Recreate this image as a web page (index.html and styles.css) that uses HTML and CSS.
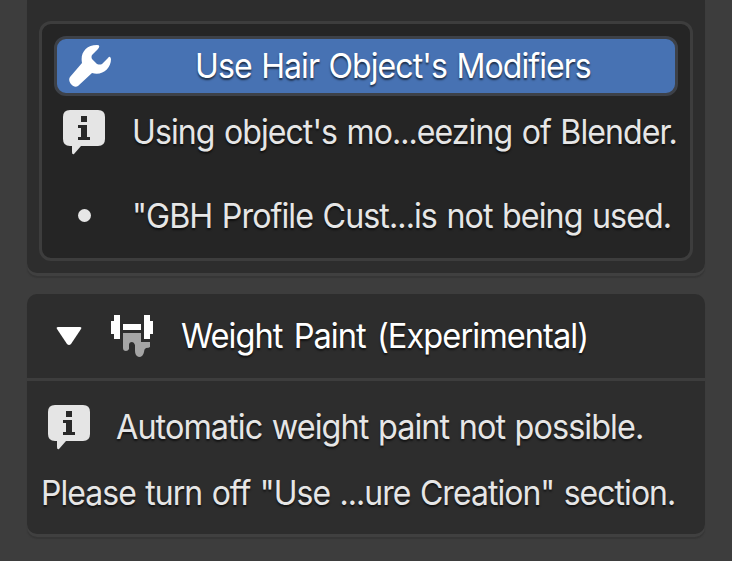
FILE: index.html
```
<!DOCTYPE html>
<html lang="en">
<head>
<meta charset="utf-8">
<title>Hair panel</title>
<link rel="stylesheet" href="styles.css">
</head>
<body>
<svg class="defs" width="0" height="0" aria-hidden="true">
  <symbol id="info" viewBox="0 0 44 46">
    <path fill="#e5e5e5" d="M8 1H36Q43 1 43 8V30Q43 37 36 37H19L12 45Q10 46 10 43V37H8Q1 37 1 30V8Q1 1 8 1Z"/>
    <path fill="#282828" d="M19 7h6v6h-6zM16 16h9v12h3v3H16v-3h3v-9h-3z"/>
  </symbol>
</svg>
<main class="sidebar">
  <section class="panel panel-top">
    <div class="box">
      <button class="button">
        <svg class="wrench" viewBox="0 0 44 44"><path fill="#fff" d="M29 1C18 1 12 9 14 19L2 33C-1 37 5 45 10 42L24 29C34 32 43 25 43 15Q42 11 40 14L34 20Q32 21 29 20L24 15Q23 13 24 11L30 5Q33 1 29 1Z"/></svg>
        <span class="text t1">Use Hair Object's Modifiers</span>
      </button>
      <div class="row info-row"><svg class="info"><use href="#info"/></svg><span class="text t2">Using object's mo...eezing of Blender.</span></div>
      <div class="row dot-row"><span class="dot"></span><span class="text t3">"GBH Profile Cust...is not being used.</span></div>
    </div>
  </section>
  <section class="panel">
    <header class="header">
      <svg class="arrow" viewBox="0 0 26 20"><path fill="#fff" d="M2 1H24Q26 1 25 3L15 18Q13 20 11 18L1 3Q0 1 2 1Z"/></svg>
      <svg class="weight" viewBox="0 0 44 44"><path fill="#fff" d="M4 1h6v24H4v-5H1V7h3zM34 1h6v6h3v13h-3v5h-6zM13 10h18v6H13z"/><path fill="#a5a5a5" d="M13 19H31V28H40V33Q39 34 36 34Q34 35 34 38Q33 43 29 43Q25 42 25 37V31Q24 28 22 28Q19 28 19 31V35Q18 37 16 37Q13 37 13 34Z"/></svg>
      <span class="text t4">Weight Paint (Experimental)</span>
    </header>
    <div class="content">
      <div class="row auto-row"><svg class="info"><use href="#info"/></svg><span class="text t5">Automatic weight paint not possible.</span></div>
      <div class="row last-row"><span class="text t6">Please turn off "Use ...ure Creation" section.</span></div>
    </div>
  </section>
</main>
</body>
</html>
```
FILE: styles.css
```
* { box-sizing: border-box; }
body { margin: 0; background: #3d3d3d; font-family: Inter, sans-serif; }
.defs { display: block; }
svg { flex: none; }
.sidebar { height: 561px; padding: 0 27px; overflow: hidden; display: flex; flex-direction: column; gap: 21px; }
.panel { background: #2d2d2d; border-radius: 10px; box-shadow: 0 3px 0 #404040, 0 5px 1px #363636; height: 240px; flex: none; }
.panel-top { height: 273px; border-radius: 0 0 10px 10px; padding: 21px 12px 12px; }
.box { height: 240px; background: #252525; border: 3px solid #3d3d3d; border-radius: 12px; padding: 12px; }
.button { display: flex; align-items: center; width: 624px; height: 60px; padding: 0 0 0 11px; background: #4772b3; border: 3px solid #3d4148; border-radius: 12px; }
.text { font: 400 34px/40px Inter, sans-serif; letter-spacing: -1px; word-spacing: 1.5px; color: #e6e6e6; white-space: pre; text-shadow: 0 2px 2px rgba(0,0,0,.6); flex: none; transform-origin: left center; }
.row { display: flex; align-items: center; }
.wrench { width: 44px; height: 44px; }
.info { width: 44px; height: 46px; }
.info-row { height: 72px; padding-left: 8px; }
.dot-row { height: 95px; padding-left: 24px; }
.dot { width: 13px; height: 13px; border-radius: 50%; background: #e6e6e6; flex: none; }
.header { display: flex; align-items: center; height: 87px; border-bottom: 3px solid #3d3d3d; padding-left: 29px; }
.arrow { width: 26px; height: 20px; }
.weight { width: 44px; height: 44px; margin-left: 28px; }
.auto-row { height: 92px; padding-left: 20px; }
.last-row { height: 39px; padding-left: 14px; }
.t1 { margin-left: 83px; color: #fff; transform: scaleX(.943); }
.t2 { margin-left: 26px; transform: scaleX(.943); }
.t3 { margin-left: 41px; transform: scaleX(.948); }
.t4 { margin-left: 27px; color: #fff; word-spacing: 3px; transform: scaleX(.959); }
.t5 { margin-left: 25px; transform: scaleX(.953); }
.t6 { transform: scaleX(.939); }
```
